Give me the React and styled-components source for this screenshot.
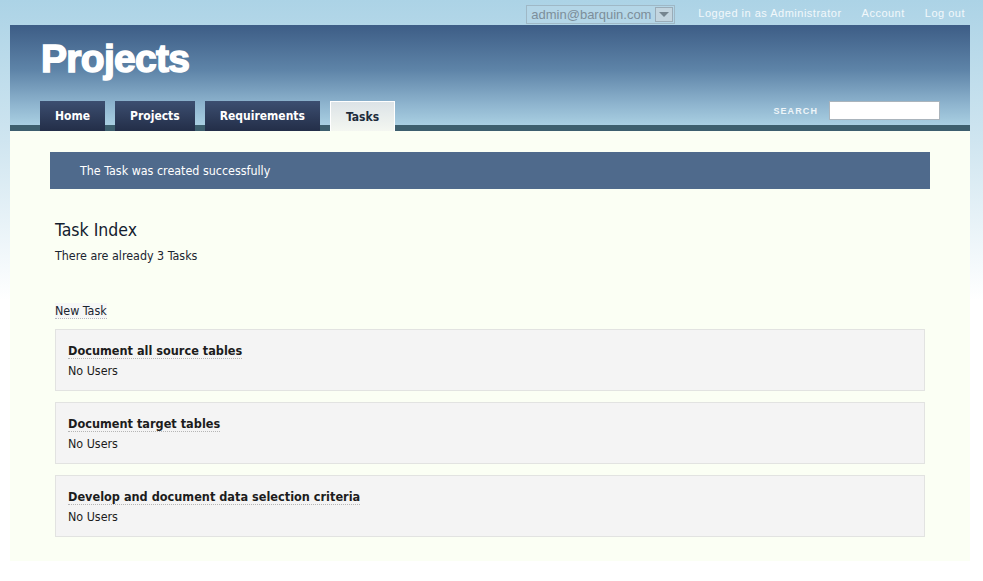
import React from "react";
import styled, { createGlobalStyle } from "styled-components";

const Global = createGlobalStyle`
  html, body { margin: 0; padding: 0; }
  body {
    background: #fff linear-gradient(180deg, #acd3e6 0px, #cfe5f0 140px, #ffffff 300px) no-repeat;
    font-family: "DejaVu Sans Condensed", "DejaVu Sans", sans-serif;
    font-stretch: condensed;
    min-height: 581px;
  }
`;

const Page = styled.div`
  width: 960px;
  margin-left: 10px;
`;

const TopBar = styled.div`
  height: 25px;
  display: flex;
  align-items: center;
  justify-content: flex-end;
  padding-right: 5px;
  gap: 20px;
`;

const FakeSelect = styled.div`
  display: flex;
  align-items: center;
  width: 147px;
  height: 17px;
  border: 1px solid #9fb8c6;
  background: #b4d6e7;
  margin-right: 3px;
  margin-top: 4px;
`;

const SelectText = styled.span`
  flex: 1;
  font-family: "Liberation Sans", Arial, sans-serif;
  font-stretch: normal;
  font-size: 13px;
  color: #7c8e9a;
  padding-left: 4px;
  line-height: 17px;
`;

const SelectArrow = styled.span`
  width: 18px;
  height: 15px;
  margin-right: 1px;
  border: 1px solid #9aacb8;
  background: #c3d5df;
  display: flex;
  align-items: center;
  justify-content: center;
  box-sizing: border-box;
  &::after {
    content: "";
    border-left: 5px solid transparent;
    border-right: 5px solid transparent;
    border-top: 5px solid #75858f;
  }
`;

const TopLink = styled.a`
  font-family: "Liberation Sans", Arial, sans-serif;
  font-stretch: normal;
  font-size: 11px;
  color: #f2f8fb;
  text-decoration: none;
  letter-spacing: 0.5px;
`;

const Header = styled.div`
  height: 100px;
  background: linear-gradient(180deg, #3d5d86 0%, #5e84a8 45%, #8fb5cf 80%, #a9cfe2 100%);
  border-bottom: 6px solid #3d5f6e;
  display: flex;
  flex-direction: column;
  justify-content: space-between;
  padding: 0 30px;
`;

const Title = styled.h1`
  margin: 14px 0 0 1px;
  font-family: "Liberation Sans", Arial, sans-serif;
  font-stretch: normal;
  font-weight: 900;
  font-size: 39px;
  letter-spacing: -0.7px;
  color: #fff;
  -webkit-text-stroke: 1.5px #fff;
  line-height: 40px;
`;

const NavRow = styled.div`
  display: flex;
  align-items: flex-end;
  margin-bottom: -6px;
`;

const Tabs = styled.div`
  display: flex;
  gap: 10px;
  flex: 1;
`;

const Tab = styled.a`
  height: 30px;
  box-sizing: border-box;
  padding: 0 15px;
  display: flex;
  align-items: center;
  font-weight: bold;
  font-size: 12px;
  text-decoration: none;
  color: ${(p) => (p.$active ? "#1d2b3b" : "#ffffff")};
  background: ${(p) =>
    p.$active
      ? "linear-gradient(180deg, #dce3e7 0%, #f4f7f1 100%)"
      : "linear-gradient(180deg, #3c4e70 0%, #232e48 100%)"};
  border: ${(p) => (p.$active ? "1px solid #ffffff" : "none")};
  border-bottom: none;
`;

const Search = styled.div`
  display: flex;
  align-items: center;
  gap: 11px;
  margin-bottom: 11px;
`;

const SearchLabel = styled.label`
  font-family: "Liberation Sans", Arial, sans-serif;
  font-stretch: normal;
  font-size: 9px;
  font-weight: bold;
  letter-spacing: 1.1px;
  color: #eef5f9;
`;

const SearchInput = styled.input`
  width: 111px;
  height: 19px;
  box-sizing: border-box;
  border: 1px solid #aab4bc;
  background: #fff;
  padding: 0 3px;
`;

const Content = styled.div`
  background: #fbfff4;
  padding: 21px 40px 24px;
`;

const Flash = styled.div`
  height: 37px;
  background: #4f6a8c;
  color: #ffffff;
  font-size: 12.4px;
  display: flex;
  align-items: center;
  padding-left: 30px;
`;

const Section = styled.div`
  padding: 0 5px;
`;

const Heading = styled.h2`
  margin: 30px 0 0;
  font-weight: normal;
  font-size: 17.5px;
  color: #13202e;
  line-height: 22px;
`;

const Lead = styled.p`
  margin: 7px 0 0;
  font-size: 12.4px;
  color: #1a2430;
  line-height: 16px;
`;

const NewLink = styled.a`
  display: inline-block;
  margin-top: 39px;
  font-size: 12.4px;
  color: #1a2430;
  text-decoration: none;
  border-bottom: 1px dotted #b8b8c0;
  background: #f6f7f6;
  line-height: 15px;
`;

const List = styled.div`
  display: flex;
  flex-direction: column;
  gap: 11px;
  margin-top: 10px;
`;

const Card = styled.div`
  height: 62px;
  box-sizing: border-box;
  background: #f4f4f4;
  border: 1px solid #e2e3e1;
  padding: 10px 12px 0;
`;

const CardTitle = styled.a`
  display: inline-block;
  font-weight: bold;
  font-size: 12.6px;
  color: #1c1c1c;
  text-decoration: none;
  border-bottom: 1px dotted #b5b5b5;
  line-height: 15px;
`;

const CardMeta = styled.div`
  margin-top: 4px;
  font-size: 12.4px;
  color: #1c1c1c;
  line-height: 15px;
`;

const tasks = [
  "Document all source tables",
  "Document target tables",
  "Develop and document data selection criteria",
];

export default function App() {
  return (
    <>
      <Global />
      <Page>
        <TopBar>
          <FakeSelect>
            <SelectText>admin@barquin.com</SelectText>
            <SelectArrow />
          </FakeSelect>
          <TopLink href="#">Logged in as Administrator</TopLink>
          <TopLink href="#">Account</TopLink>
          <TopLink href="#">Log out</TopLink>
        </TopBar>
        <Header>
          <Title>Projects</Title>
          <NavRow>
            <Tabs>
              <Tab href="#">Home</Tab>
              <Tab href="#">Projects</Tab>
              <Tab href="#">Requirements</Tab>
              <Tab href="#" $active>Tasks</Tab>
            </Tabs>
            <Search>
              <SearchLabel>SEARCH</SearchLabel>
              <SearchInput type="text" />
            </Search>
          </NavRow>
        </Header>
        <Content>
          <Flash>The Task was created successfully</Flash>
          <Section>
            <Heading>Task Index</Heading>
            <Lead>There are already 3 Tasks</Lead>
            <NewLink href="#">New Task</NewLink>
            <List>
              {tasks.map((t) => (
                <Card key={t}>
                  <CardTitle href="#">{t}</CardTitle>
                  <CardMeta>No Users</CardMeta>
                </Card>
              ))}
            </List>
          </Section>
        </Content>
      </Page>
    </>
  );
}
